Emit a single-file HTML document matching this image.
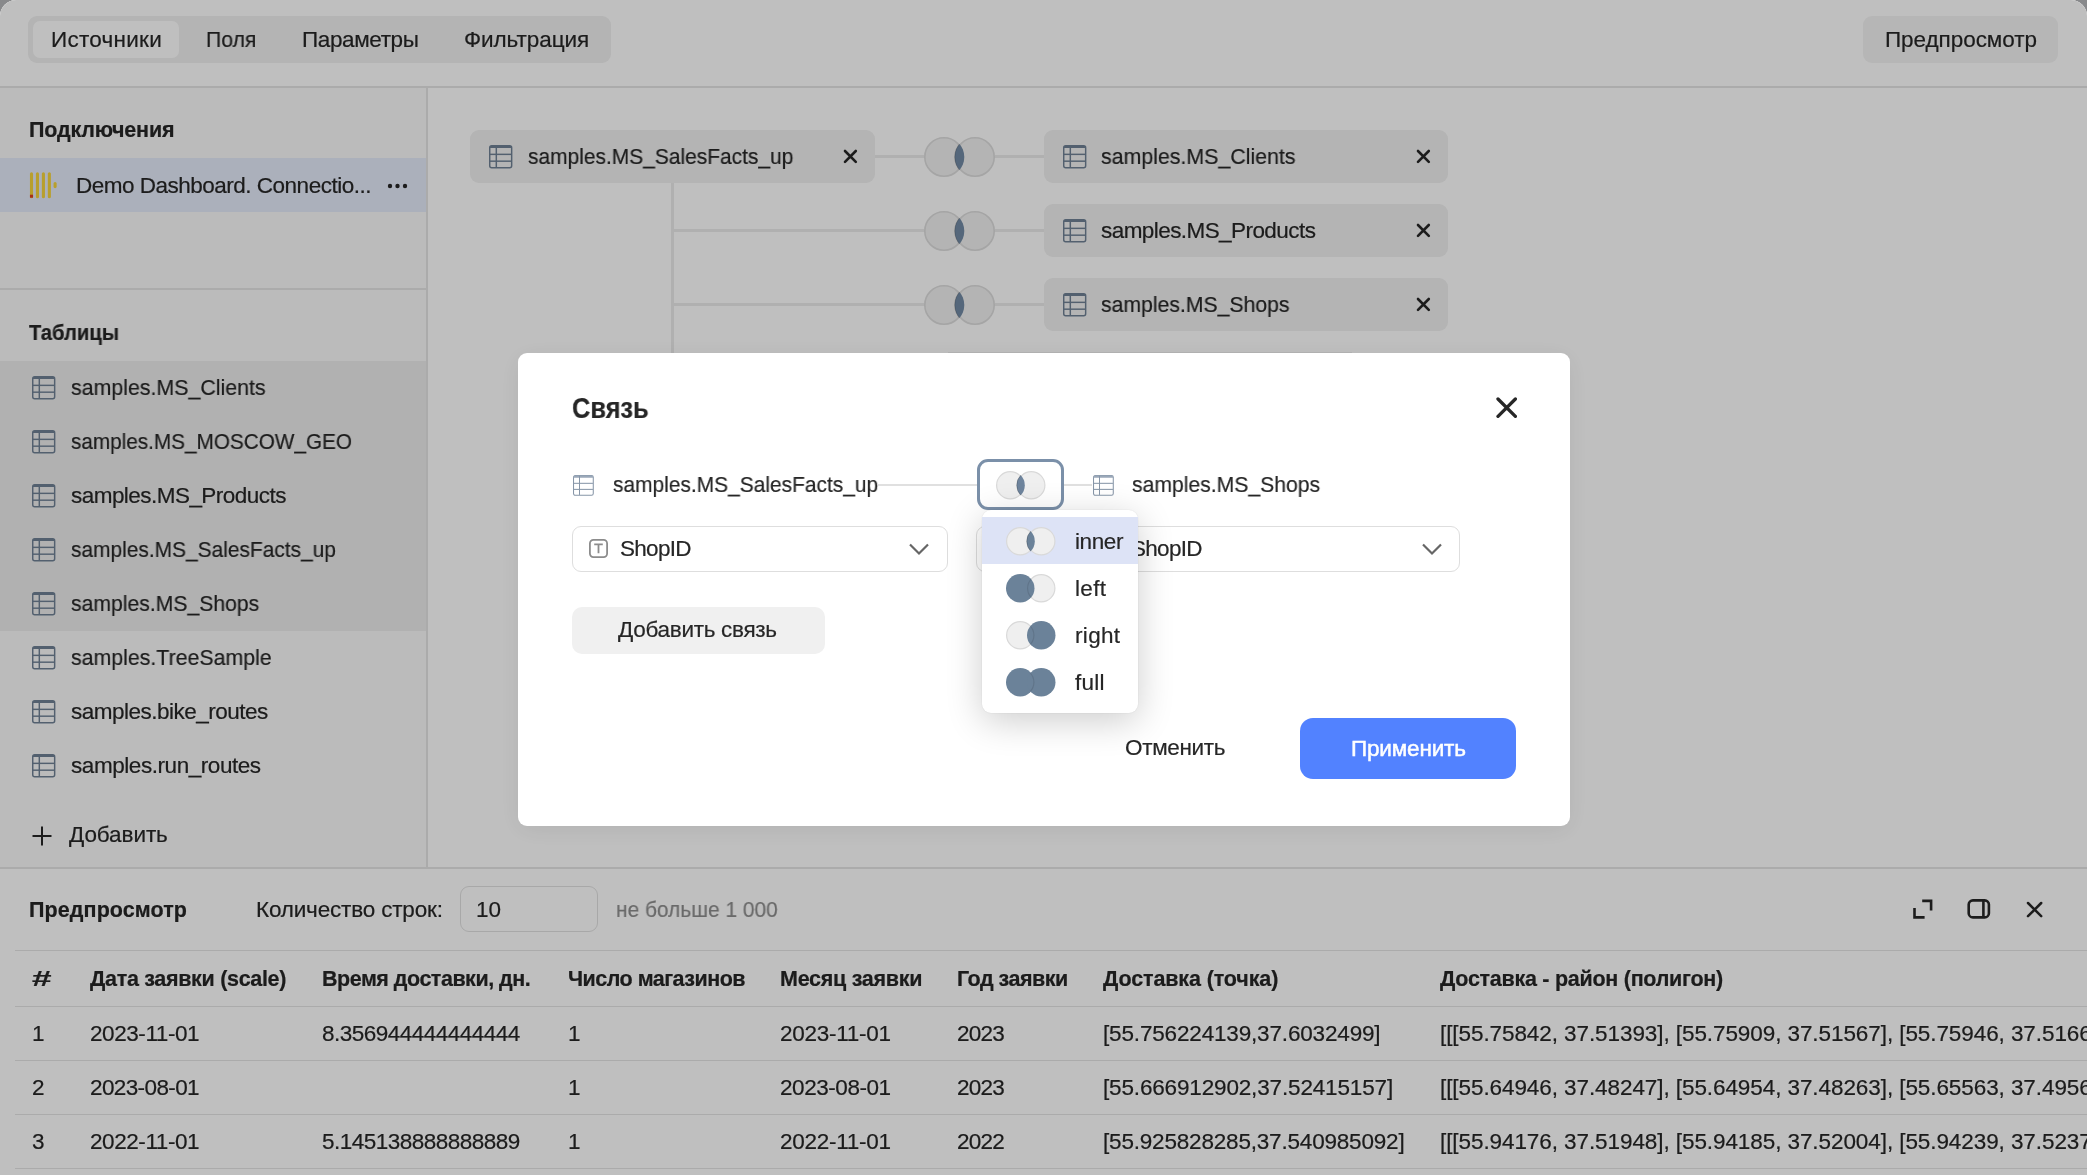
<!DOCTYPE html>
<html><head><meta charset="utf-8"><style>
html,body{margin:0;padding:0;width:2087px;height:1175px;overflow:hidden;background:#88898b}
#pg{position:absolute;left:0;top:0;width:2087px;height:1175px;border-radius:16px 16px 0 0;overflow:hidden;background:#fff}
.b{position:absolute}
.t{position:absolute;white-space:nowrap;line-height:1;will-change:transform;-webkit-text-stroke:0.2px currentColor;font-family:"Liberation Sans",sans-serif;color:#262626}
#ov{position:absolute;left:0;top:0;width:2087px;height:1175px;background:rgba(0,0,0,0.25)}
</style></head><body><div id="pg">
<div class="b" style="left:0px;top:0px;width:2087px;height:86px;background:#fff"></div>
<div class="b" style="left:0px;top:86px;width:2087px;height:1.5999999999999943px;background:#e5e5e5"></div>
<div class="b" style="left:28px;top:16px;width:583px;height:47px;background:#f0f0f0;border-radius:9px"></div>
<div class="b" style="left:33px;top:21px;width:146px;height:36.5px;background:#fff;border-radius:7px"></div>
<div class="t" style="left:50.90px;top:28.9px;font-size:22.5px;letter-spacing:0.262px;">Источники</div>
<div class="t" style="left:206.20px;top:28.9px;font-size:22.5px;transform:scaleX(0.9421);transform-origin:0 0;">Поля</div>
<div class="t" style="left:302.00px;top:28.9px;font-size:22.5px;letter-spacing:-0.387px;">Параметры</div>
<div class="t" style="left:463.70px;top:28.9px;font-size:22.5px;letter-spacing:-0.067px;">Фильтрация</div>
<div class="b" style="left:1863px;top:16px;width:195px;height:47px;background:#f3f3f3;border-radius:9px"></div>
<div class="t" style="left:1885.00px;top:29.2px;font-size:22.5px;letter-spacing:-0.055px;">Предпросмотр</div>
<div class="b" style="left:0px;top:88px;width:427px;height:780px;background:#fafafa"></div>
<div class="b" style="left:426.2px;top:88px;width:1.6000000000000227px;height:780px;background:#e5e5e5"></div>
<div class="t" style="left:29.00px;top:119.5px;font-size:21.5px;letter-spacing:-0.190px;font-weight:700;">Подключения</div>
<div class="b" style="left:0px;top:158px;width:426px;height:54px;background:rgba(82,130,255,0.12)"></div>
<svg class="b" style="left:29px;top:171px" width="30" height="29" viewBox="0 0 30 29"><line x1="2.5" y1="2.8" x2="2.5" y2="25.8" stroke="#f6d53c" stroke-width="3.1" stroke-linecap="round"/><line x1="8.45" y1="2.8" x2="8.45" y2="25.8" stroke="#f6d53c" stroke-width="3.1" stroke-linecap="round"/><line x1="14.4" y1="2.8" x2="14.4" y2="25.8" stroke="#f6d53c" stroke-width="3.1" stroke-linecap="round"/><line x1="20.35" y1="2.8" x2="20.35" y2="25.8" stroke="#f6d53c" stroke-width="3.1" stroke-linecap="round"/><line x1="26.1" y1="12.6" x2="26.1" y2="15.6" stroke="#f6d53c" stroke-width="3.1" stroke-linecap="round"/><rect x="0.95" y="23.7" width="3.1" height="3" fill="#e0401f"/></svg>
<div class="t" style="left:76.40px;top:175.0px;font-size:22.5px;letter-spacing:-0.500px;">Demo Dashboard. Connectio...</div>
<svg class="b" style="left:386px;top:181.5px" width="24" height="8"><circle cx="4" cy="4" r="2.2" fill="#262626"/><circle cx="11.5" cy="4" r="2.2" fill="#262626"/><circle cx="19" cy="4" r="2.2" fill="#262626"/></svg>
<div class="b" style="left:0px;top:288.3px;width:426px;height:1.5px;background:#e5e5e5"></div>
<div class="t" style="left:29.00px;top:322.5px;font-size:21.5px;transform:scaleX(0.9395);transform-origin:0 0;font-weight:700;">Таблицы</div>
<div class="b" style="left:0px;top:361px;width:426px;height:54px;background:rgba(0,0,0,0.05)"></div>
<svg class="b" style="left:32px;top:376px;overflow:visible" width="23.4" height="23.4" viewBox="0 0 24 24"><rect x="0.75" y="0.75" width="22.5" height="22.5" rx="2" fill="none" stroke="#6f8195" stroke-width="1.5"/><path d="M0.75 3.0V2.6Q0.75 0.75 2.6 0.75H21.4Q23.25 0.75 23.25 2.6V3.0Z" fill="#6f8195"/><line x1="7.5" y1="1" x2="7.5" y2="23" stroke="#6f8195" stroke-width="1.5"/><line x1="1" y1="9.6" x2="23" y2="9.6" stroke="#6f8195" stroke-width="1.5"/><line x1="1" y1="16.6" x2="23" y2="16.6" stroke="#6f8195" stroke-width="1.5"/></svg>
<div class="t" style="left:70.60px;top:377.2px;font-size:22.5px;transform:scaleX(0.9493);transform-origin:0 0;">samples.MS_Clients</div>
<div class="b" style="left:0px;top:415px;width:426px;height:54px;background:rgba(0,0,0,0.05)"></div>
<svg class="b" style="left:32px;top:430px;overflow:visible" width="23.4" height="23.4" viewBox="0 0 24 24"><rect x="0.75" y="0.75" width="22.5" height="22.5" rx="2" fill="none" stroke="#6f8195" stroke-width="1.5"/><path d="M0.75 3.0V2.6Q0.75 0.75 2.6 0.75H21.4Q23.25 0.75 23.25 2.6V3.0Z" fill="#6f8195"/><line x1="7.5" y1="1" x2="7.5" y2="23" stroke="#6f8195" stroke-width="1.5"/><line x1="1" y1="9.6" x2="23" y2="9.6" stroke="#6f8195" stroke-width="1.5"/><line x1="1" y1="16.6" x2="23" y2="16.6" stroke="#6f8195" stroke-width="1.5"/></svg>
<div class="t" style="left:70.60px;top:431.2px;font-size:22.5px;transform:scaleX(0.9213);transform-origin:0 0;">samples.MS_MOSCOW_GEO</div>
<div class="b" style="left:0px;top:469px;width:426px;height:54px;background:rgba(0,0,0,0.05)"></div>
<svg class="b" style="left:32px;top:484px;overflow:visible" width="23.4" height="23.4" viewBox="0 0 24 24"><rect x="0.75" y="0.75" width="22.5" height="22.5" rx="2" fill="none" stroke="#6f8195" stroke-width="1.5"/><path d="M0.75 3.0V2.6Q0.75 0.75 2.6 0.75H21.4Q23.25 0.75 23.25 2.6V3.0Z" fill="#6f8195"/><line x1="7.5" y1="1" x2="7.5" y2="23" stroke="#6f8195" stroke-width="1.5"/><line x1="1" y1="9.6" x2="23" y2="9.6" stroke="#6f8195" stroke-width="1.5"/><line x1="1" y1="16.6" x2="23" y2="16.6" stroke="#6f8195" stroke-width="1.5"/></svg>
<div class="t" style="left:70.60px;top:485.2px;font-size:22.5px;letter-spacing:-0.539px;">samples.MS_Products</div>
<div class="b" style="left:0px;top:523px;width:426px;height:54px;background:rgba(0,0,0,0.05)"></div>
<svg class="b" style="left:32px;top:538px;overflow:visible" width="23.4" height="23.4" viewBox="0 0 24 24"><rect x="0.75" y="0.75" width="22.5" height="22.5" rx="2" fill="none" stroke="#6f8195" stroke-width="1.5"/><path d="M0.75 3.0V2.6Q0.75 0.75 2.6 0.75H21.4Q23.25 0.75 23.25 2.6V3.0Z" fill="#6f8195"/><line x1="7.5" y1="1" x2="7.5" y2="23" stroke="#6f8195" stroke-width="1.5"/><line x1="1" y1="9.6" x2="23" y2="9.6" stroke="#6f8195" stroke-width="1.5"/><line x1="1" y1="16.6" x2="23" y2="16.6" stroke="#6f8195" stroke-width="1.5"/></svg>
<div class="t" style="left:70.60px;top:539.2px;font-size:22.5px;transform:scaleX(0.9295);transform-origin:0 0;">samples.MS_SalesFacts_up</div>
<div class="b" style="left:0px;top:577px;width:426px;height:54px;background:rgba(0,0,0,0.05)"></div>
<svg class="b" style="left:32px;top:592px;overflow:visible" width="23.4" height="23.4" viewBox="0 0 24 24"><rect x="0.75" y="0.75" width="22.5" height="22.5" rx="2" fill="none" stroke="#6f8195" stroke-width="1.5"/><path d="M0.75 3.0V2.6Q0.75 0.75 2.6 0.75H21.4Q23.25 0.75 23.25 2.6V3.0Z" fill="#6f8195"/><line x1="7.5" y1="1" x2="7.5" y2="23" stroke="#6f8195" stroke-width="1.5"/><line x1="1" y1="9.6" x2="23" y2="9.6" stroke="#6f8195" stroke-width="1.5"/><line x1="1" y1="16.6" x2="23" y2="16.6" stroke="#6f8195" stroke-width="1.5"/></svg>
<div class="t" style="left:70.60px;top:593.2px;font-size:22.5px;transform:scaleX(0.9410);transform-origin:0 0;">samples.MS_Shops</div>
<svg class="b" style="left:32px;top:646px;overflow:visible" width="23.4" height="23.4" viewBox="0 0 24 24"><rect x="0.75" y="0.75" width="22.5" height="22.5" rx="2" fill="none" stroke="#6f8195" stroke-width="1.5"/><path d="M0.75 3.0V2.6Q0.75 0.75 2.6 0.75H21.4Q23.25 0.75 23.25 2.6V3.0Z" fill="#6f8195"/><line x1="7.5" y1="1" x2="7.5" y2="23" stroke="#6f8195" stroke-width="1.5"/><line x1="1" y1="9.6" x2="23" y2="9.6" stroke="#6f8195" stroke-width="1.5"/><line x1="1" y1="16.6" x2="23" y2="16.6" stroke="#6f8195" stroke-width="1.5"/></svg>
<div class="t" style="left:70.60px;top:647.2px;font-size:22.5px;transform:scaleX(0.9476);transform-origin:0 0;">samples.TreeSample</div>
<svg class="b" style="left:32px;top:700px;overflow:visible" width="23.4" height="23.4" viewBox="0 0 24 24"><rect x="0.75" y="0.75" width="22.5" height="22.5" rx="2" fill="none" stroke="#6f8195" stroke-width="1.5"/><path d="M0.75 3.0V2.6Q0.75 0.75 2.6 0.75H21.4Q23.25 0.75 23.25 2.6V3.0Z" fill="#6f8195"/><line x1="7.5" y1="1" x2="7.5" y2="23" stroke="#6f8195" stroke-width="1.5"/><line x1="1" y1="9.6" x2="23" y2="9.6" stroke="#6f8195" stroke-width="1.5"/><line x1="1" y1="16.6" x2="23" y2="16.6" stroke="#6f8195" stroke-width="1.5"/></svg>
<div class="t" style="left:70.60px;top:701.2px;font-size:22.5px;letter-spacing:-0.500px;">samples.bike_routes</div>
<svg class="b" style="left:32px;top:754px;overflow:visible" width="23.4" height="23.4" viewBox="0 0 24 24"><rect x="0.75" y="0.75" width="22.5" height="22.5" rx="2" fill="none" stroke="#6f8195" stroke-width="1.5"/><path d="M0.75 3.0V2.6Q0.75 0.75 2.6 0.75H21.4Q23.25 0.75 23.25 2.6V3.0Z" fill="#6f8195"/><line x1="7.5" y1="1" x2="7.5" y2="23" stroke="#6f8195" stroke-width="1.5"/><line x1="1" y1="9.6" x2="23" y2="9.6" stroke="#6f8195" stroke-width="1.5"/><line x1="1" y1="16.6" x2="23" y2="16.6" stroke="#6f8195" stroke-width="1.5"/></svg>
<div class="t" style="left:70.60px;top:755.2px;font-size:22.5px;letter-spacing:-0.441px;">samples.run_routes</div>
<svg class="b" style="left:31px;top:825px" width="22" height="22" viewBox="0 0 22 22"><path d="M11 1.5V20.5M1.5 11H20.5" stroke="#262626" stroke-width="2.0"/></svg>
<div class="t" style="left:69.00px;top:824.3px;font-size:22.5px;letter-spacing:-0.086px;">Добавить</div>
<div class="b" style="left:428px;top:88px;width:1659px;height:780px;background:#fff"></div>
<div class="b" style="left:671px;top:183px;width:3px;height:170px;background:#ebebeb"></div>
<div class="b" style="left:948px;top:351.5px;width:404px;height:1.5px;background:rgba(0,0,0,0.06)"></div>
<div class="b" style="left:875px;top:155px;width:49px;height:3px;background:#ebebeb"></div>
<div class="b" style="left:995px;top:155px;width:49px;height:3px;background:#ebebeb"></div>
<div class="b" style="left:674px;top:229px;width:250px;height:3px;background:#ebebeb"></div>
<div class="b" style="left:995px;top:229px;width:49px;height:3px;background:#ebebeb"></div>
<div class="b" style="left:674px;top:303px;width:250px;height:3px;background:#ebebeb"></div>
<div class="b" style="left:995px;top:303px;width:49px;height:3px;background:#ebebeb"></div>
<div class="b" style="left:470px;top:130px;width:405px;height:53px;background:#f0f0f0;border-radius:9px"></div>
<svg class="b" style="left:489.1px;top:145.1px;overflow:visible" width="23.4" height="23.4" viewBox="0 0 24 24"><rect x="0.75" y="0.75" width="22.5" height="22.5" rx="2" fill="none" stroke="#6f8195" stroke-width="1.5"/><path d="M0.75 3.0V2.6Q0.75 0.75 2.6 0.75H21.4Q23.25 0.75 23.25 2.6V3.0Z" fill="#6f8195"/><line x1="7.5" y1="1" x2="7.5" y2="23" stroke="#6f8195" stroke-width="1.5"/><line x1="1" y1="9.6" x2="23" y2="9.6" stroke="#6f8195" stroke-width="1.5"/><line x1="1" y1="16.6" x2="23" y2="16.6" stroke="#6f8195" stroke-width="1.5"/></svg>
<div class="t" style="left:527.60px;top:146.0px;font-size:22.5px;transform:scaleX(0.9309);transform-origin:0 0;">samples.MS_SalesFacts_up</div>
<svg class="b" style="left:842.9px;top:149.4px" width="14.8" height="14.8" viewBox="-7.4 -7.4 14.8 14.8"><path d="M-5.4 -5.4L5.4 5.4M5.4 -5.4L-5.4 5.4" stroke="#262626" stroke-width="2.6" stroke-linecap="round"/></svg>
<div class="b" style="left:1044px;top:130px;width:404px;height:53px;background:#f0f0f0;border-radius:9px"></div>
<svg class="b" style="left:1063px;top:145px;overflow:visible" width="23.4" height="23.4" viewBox="0 0 24 24"><rect x="0.75" y="0.75" width="22.5" height="22.5" rx="2" fill="none" stroke="#6f8195" stroke-width="1.5"/><path d="M0.75 3.0V2.6Q0.75 0.75 2.6 0.75H21.4Q23.25 0.75 23.25 2.6V3.0Z" fill="#6f8195"/><line x1="7.5" y1="1" x2="7.5" y2="23" stroke="#6f8195" stroke-width="1.5"/><line x1="1" y1="9.6" x2="23" y2="9.6" stroke="#6f8195" stroke-width="1.5"/><line x1="1" y1="16.6" x2="23" y2="16.6" stroke="#6f8195" stroke-width="1.5"/></svg>
<div class="t" style="left:1101.40px;top:146.0px;font-size:22.5px;transform:scaleX(0.9488);transform-origin:0 0;">samples.MS_Clients</div>
<svg class="b" style="left:1416.0px;top:149.29999999999998px" width="14.8" height="14.8" viewBox="-7.4 -7.4 14.8 14.8"><path d="M-5.4 -5.4L5.4 5.4M5.4 -5.4L-5.4 5.4" stroke="#262626" stroke-width="2.6" stroke-linecap="round"/></svg>
<svg class="b" style="left:922.00px;top:134.70px" width="75.00" height="44.00"><defs><clipPath id="vl1"><circle cx="22.0" cy="22.0" r="20.3"/></clipPath><clipPath id="vr1"><circle cx="53.0" cy="22.0" r="20.0"/></clipPath></defs><circle cx="22.0" cy="22.0" r="19.2" fill="#f1f1f1" stroke="#dcdcdc" stroke-width="1.6"/><circle cx="53.0" cy="22.0" r="19.2" fill="#f1f1f1" stroke="#dcdcdc" stroke-width="1.6"/><circle cx="53.0" cy="22.0" r="20.3" fill="#728aa4" stroke="rgba(0,0,0,0.25)" stroke-width="0.8" clip-path="url(#vl1)"/></svg>
<div class="b" style="left:1044px;top:204px;width:404px;height:53px;background:#f0f0f0;border-radius:9px"></div>
<svg class="b" style="left:1063px;top:219px;overflow:visible" width="23.4" height="23.4" viewBox="0 0 24 24"><rect x="0.75" y="0.75" width="22.5" height="22.5" rx="2" fill="none" stroke="#6f8195" stroke-width="1.5"/><path d="M0.75 3.0V2.6Q0.75 0.75 2.6 0.75H21.4Q23.25 0.75 23.25 2.6V3.0Z" fill="#6f8195"/><line x1="7.5" y1="1" x2="7.5" y2="23" stroke="#6f8195" stroke-width="1.5"/><line x1="1" y1="9.6" x2="23" y2="9.6" stroke="#6f8195" stroke-width="1.5"/><line x1="1" y1="16.6" x2="23" y2="16.6" stroke="#6f8195" stroke-width="1.5"/></svg>
<div class="t" style="left:1101.40px;top:220.0px;font-size:22.5px;letter-spacing:-0.567px;">samples.MS_Products</div>
<svg class="b" style="left:1416.0px;top:223.29999999999998px" width="14.8" height="14.8" viewBox="-7.4 -7.4 14.8 14.8"><path d="M-5.4 -5.4L5.4 5.4M5.4 -5.4L-5.4 5.4" stroke="#262626" stroke-width="2.6" stroke-linecap="round"/></svg>
<svg class="b" style="left:922.00px;top:208.70px" width="75.00" height="44.00"><defs><clipPath id="vl2"><circle cx="22.0" cy="22.0" r="20.3"/></clipPath><clipPath id="vr2"><circle cx="53.0" cy="22.0" r="20.0"/></clipPath></defs><circle cx="22.0" cy="22.0" r="19.2" fill="#f1f1f1" stroke="#dcdcdc" stroke-width="1.6"/><circle cx="53.0" cy="22.0" r="19.2" fill="#f1f1f1" stroke="#dcdcdc" stroke-width="1.6"/><circle cx="53.0" cy="22.0" r="20.3" fill="#728aa4" stroke="rgba(0,0,0,0.25)" stroke-width="0.8" clip-path="url(#vl2)"/></svg>
<div class="b" style="left:1044px;top:278px;width:404px;height:53px;background:#f0f0f0;border-radius:9px"></div>
<svg class="b" style="left:1063px;top:293px;overflow:visible" width="23.4" height="23.4" viewBox="0 0 24 24"><rect x="0.75" y="0.75" width="22.5" height="22.5" rx="2" fill="none" stroke="#6f8195" stroke-width="1.5"/><path d="M0.75 3.0V2.6Q0.75 0.75 2.6 0.75H21.4Q23.25 0.75 23.25 2.6V3.0Z" fill="#6f8195"/><line x1="7.5" y1="1" x2="7.5" y2="23" stroke="#6f8195" stroke-width="1.5"/><line x1="1" y1="9.6" x2="23" y2="9.6" stroke="#6f8195" stroke-width="1.5"/><line x1="1" y1="16.6" x2="23" y2="16.6" stroke="#6f8195" stroke-width="1.5"/></svg>
<div class="t" style="left:1101.40px;top:294.0px;font-size:22.5px;transform:scaleX(0.9425);transform-origin:0 0;">samples.MS_Shops</div>
<svg class="b" style="left:1416.0px;top:297.3px" width="14.8" height="14.8" viewBox="-7.4 -7.4 14.8 14.8"><path d="M-5.4 -5.4L5.4 5.4M5.4 -5.4L-5.4 5.4" stroke="#262626" stroke-width="2.6" stroke-linecap="round"/></svg>
<svg class="b" style="left:922.00px;top:282.70px" width="75.00" height="44.00"><defs><clipPath id="vl3"><circle cx="22.0" cy="22.0" r="20.3"/></clipPath><clipPath id="vr3"><circle cx="53.0" cy="22.0" r="20.0"/></clipPath></defs><circle cx="22.0" cy="22.0" r="19.2" fill="#f1f1f1" stroke="#dcdcdc" stroke-width="1.6"/><circle cx="53.0" cy="22.0" r="19.2" fill="#f1f1f1" stroke="#dcdcdc" stroke-width="1.6"/><circle cx="53.0" cy="22.0" r="20.3" fill="#728aa4" stroke="rgba(0,0,0,0.25)" stroke-width="0.8" clip-path="url(#vl3)"/></svg>
<div class="b" style="left:0px;top:868px;width:2087px;height:307px;background:#fff"></div>
<div class="b" style="left:0px;top:867.2px;width:2087px;height:1.599999999999909px;background:#e5e5e5"></div>
<div class="t" style="left:29.00px;top:899.5px;font-size:21.5px;letter-spacing:0.091px;font-weight:700;">Предпросмотр</div>
<div class="t" style="left:255.60px;top:898.7px;font-size:22.5px;letter-spacing:-0.175px;">Количество строк:</div>
<div class="b" style="left:460px;top:886px;width:138px;height:46px;border:1.5px solid rgba(0,0,0,0.12);border-radius:9px;box-sizing:border-box"></div>
<div class="t" style="left:476.00px;top:898.7px;font-size:22.5px;">10</div>
<div class="t" style="left:615.60px;top:898.7px;font-size:22.5px;transform:scaleX(0.9294);transform-origin:0 0;color:#8c8c8c;">не больше 1 000</div>
<svg class="b" style="left:1908px;top:895px" width="30" height="30" viewBox="0 0 30 30"><path d="M6.5 13.1V22.4H16.6M14.2 5.9H23.1V15.5" fill="none" stroke="#262626" stroke-width="2.6"/></svg>
<svg class="b" style="left:1963px;top:895px" width="32" height="30" viewBox="0 0 32 30"><rect x="5.7" y="5.4" width="20.2" height="17" rx="4.2" fill="none" stroke="#262626" stroke-width="2.6"/><path d="M20.4 5.4V22.4" stroke="#262626" stroke-width="2.6"/></svg>
<svg class="b" style="left:2026.0px;top:900.6px" width="17.2" height="17.2" viewBox="-8.6 -8.6 17.2 17.2"><path d="M-6.6 -6.6L6.6 6.6M6.6 -6.6L-6.6 6.6" stroke="#262626" stroke-width="2.5" stroke-linecap="round"/></svg>
<div class="b" style="left:15px;top:949.8px;width:2072px;height:1.5px;background:#e5e5e5"></div>
<div class="b" style="left:15px;top:1005.8px;width:2072px;height:1.5px;background:#e5e5e5"></div>
<div class="b" style="left:15px;top:1059.8px;width:2072px;height:1.5px;background:#e5e5e5"></div>
<div class="b" style="left:15px;top:1113.8px;width:2072px;height:1.5px;background:#e5e5e5"></div>
<div class="b" style="left:15px;top:1167.8px;width:2072px;height:1.5px;background:#e5e5e5"></div>
<div class="t" style="left:32.00px;top:969.1px;font-size:21.5px;transform:scaleX(1.6333);transform-origin:0 0;font-weight:700;">#</div>
<div class="t" style="left:90.00px;top:969.1px;font-size:21.5px;letter-spacing:-0.306px;font-weight:700;">Дата заявки (scale)</div>
<div class="t" style="left:321.60px;top:969.1px;font-size:21.5px;letter-spacing:-0.483px;font-weight:700;">Время доставки, дн.</div>
<div class="t" style="left:567.50px;top:969.1px;font-size:21.5px;letter-spacing:-0.521px;font-weight:700;">Число магазинов</div>
<div class="t" style="left:779.50px;top:969.1px;font-size:21.5px;letter-spacing:-0.264px;font-weight:700;">Месяц заявки</div>
<div class="t" style="left:956.50px;top:969.1px;font-size:21.5px;letter-spacing:-0.500px;font-weight:700;">Год заявки</div>
<div class="t" style="left:1102.50px;top:969.1px;font-size:21.5px;letter-spacing:-0.120px;font-weight:700;">Доставка (точка)</div>
<div class="t" style="left:1439.50px;top:969.1px;font-size:21.5px;letter-spacing:-0.268px;font-weight:700;">Доставка - район (полигон)</div>
<div class="t" style="left:32.00px;top:1022.7px;font-size:22.5px;">1</div>
<div class="t" style="left:90.00px;top:1022.7px;font-size:22.5px;letter-spacing:-0.422px;">2023-11-01</div>
<div class="t" style="left:321.60px;top:1022.7px;font-size:22.5px;letter-spacing:-0.506px;">8.356944444444444</div>
<div class="t" style="left:567.50px;top:1022.7px;font-size:22.5px;">1</div>
<div class="t" style="left:779.50px;top:1022.7px;font-size:22.5px;letter-spacing:-0.256px;">2023-11-01</div>
<div class="t" style="left:956.50px;top:1022.7px;font-size:22.5px;letter-spacing:-0.733px;">2023</div>
<div class="t" style="left:1102.50px;top:1022.7px;font-size:22.5px;letter-spacing:-0.163px;">[55.756224139,37.6032499]</div>
<div class="t" style="left:1439.50px;top:1022.7px;font-size:22.5px;letter-spacing:-0.08px;">[[[55.75842, 37.51393], [55.75909, 37.51567], [55.75946, 37.51668], [55.75982, 37.5178]]]</div>
<div class="t" style="left:32.00px;top:1076.7px;font-size:22.5px;">2</div>
<div class="t" style="left:90.00px;top:1076.7px;font-size:22.5px;letter-spacing:-0.611px;">2023-08-01</div>
<div class="t" style="left:567.50px;top:1076.7px;font-size:22.5px;">1</div>
<div class="t" style="left:779.50px;top:1076.7px;font-size:22.5px;letter-spacing:-0.444px;">2023-08-01</div>
<div class="t" style="left:956.50px;top:1076.7px;font-size:22.5px;letter-spacing:-0.733px;">2023</div>
<div class="t" style="left:1102.50px;top:1076.7px;font-size:22.5px;letter-spacing:-0.156px;">[55.666912902,37.52415157]</div>
<div class="t" style="left:1439.50px;top:1076.7px;font-size:22.5px;letter-spacing:-0.08px;">[[[55.64946, 37.48247], [55.64954, 37.48263], [55.65563, 37.49561], [55.6571, 37.4987]]]</div>
<div class="t" style="left:32.00px;top:1130.7px;font-size:22.5px;">3</div>
<div class="t" style="left:90.00px;top:1130.7px;font-size:22.5px;letter-spacing:-0.422px;">2022-11-01</div>
<div class="t" style="left:321.60px;top:1130.7px;font-size:22.5px;letter-spacing:-0.506px;">5.145138888888889</div>
<div class="t" style="left:567.50px;top:1130.7px;font-size:22.5px;">1</div>
<div class="t" style="left:779.50px;top:1130.7px;font-size:22.5px;letter-spacing:-0.256px;">2022-11-01</div>
<div class="t" style="left:956.50px;top:1130.7px;font-size:22.5px;letter-spacing:-0.733px;">2022</div>
<div class="t" style="left:1102.50px;top:1130.7px;font-size:22.5px;letter-spacing:-0.188px;">[55.925828285,37.540985092]</div>
<div class="t" style="left:1439.50px;top:1130.7px;font-size:22.5px;letter-spacing:-0.08px;">[[[55.94176, 37.51948], [55.94185, 37.52004], [55.94239, 37.52371], [55.9431, 37.5261]]]</div>
<div id="ov"></div>
<div class="b" style="left:518px;top:353px;width:1052px;height:473px;background:#fff;border-radius:9px;box-shadow:0 4px 24px rgba(0,0,0,0.07)"></div>
<div class="t" style="left:572.30px;top:393.8px;font-size:29px;transform:scaleX(0.8756);transform-origin:0 0;font-weight:700;">Связь</div>
<svg class="b" style="left:1495.5px;top:396.5px" width="21.4" height="21.4" viewBox="-10.7 -10.7 21.4 21.4"><path d="M-8.7 -8.7L8.7 8.7M8.7 -8.7L-8.7 8.7" stroke="#262626" stroke-width="3.3" stroke-linecap="round"/></svg>
<svg class="b" style="left:573px;top:474.7px;overflow:visible" width="20.8" height="20.8" viewBox="0 0 24 24"><rect x="0.6" y="0.6" width="22.8" height="22.8" rx="2" fill="none" stroke="#8796a8" stroke-width="1.2"/><path d="M0.6 3.2V2.6Q0.6 0.6 2.6 0.6H21.4Q23.4 0.6 23.4 2.6V3.2Z" fill="#9aa8b9"/><line x1="7.5" y1="1" x2="7.5" y2="23" stroke="#8796a8" stroke-width="1.2"/><line x1="1" y1="9.6" x2="23" y2="9.6" stroke="#8796a8" stroke-width="1.2"/><line x1="1" y1="16.6" x2="23" y2="16.6" stroke="#8796a8" stroke-width="1.2"/></svg>
<div class="t" style="left:612.50px;top:474.4px;font-size:22.5px;transform:scaleX(0.9302);transform-origin:0 0;">samples.MS_SalesFacts_up</div>
<div class="b" style="left:878px;top:484px;width:99px;height:2px;background:#e0e0e0"></div>
<div class="b" style="left:1064px;top:484px;width:28px;height:2px;background:#e0e0e0"></div>
<div class="b" style="left:977px;top:458.5px;width:87px;height:51.5px;border:3px solid #7b90a9;border-radius:11px;box-sizing:border-box;background:#fff"></div>
<svg class="b" style="left:993.75px;top:468.75px" width="53.50" height="32.50"><defs><clipPath id="vl4"><circle cx="16.25" cy="16.25" r="14.55"/></clipPath><clipPath id="vr4"><circle cx="37.25" cy="16.25" r="14.25"/></clipPath></defs><circle cx="16.25" cy="16.25" r="13.65" fill="#efefef" stroke="#d9d9d9" stroke-width="1.2"/><circle cx="37.25" cy="16.25" r="13.65" fill="#efefef" stroke="#d9d9d9" stroke-width="1.2"/><circle cx="37.25" cy="16.25" r="14.55" fill="#6e849d" stroke="rgba(0,0,0,0.25)" stroke-width="0.8" clip-path="url(#vl4)"/></svg>
<svg class="b" style="left:1092.8px;top:474.7px;overflow:visible" width="20.8" height="20.8" viewBox="0 0 24 24"><rect x="0.6" y="0.6" width="22.8" height="22.8" rx="2" fill="none" stroke="#8796a8" stroke-width="1.2"/><path d="M0.6 3.2V2.6Q0.6 0.6 2.6 0.6H21.4Q23.4 0.6 23.4 2.6V3.2Z" fill="#9aa8b9"/><line x1="7.5" y1="1" x2="7.5" y2="23" stroke="#8796a8" stroke-width="1.2"/><line x1="1" y1="9.6" x2="23" y2="9.6" stroke="#8796a8" stroke-width="1.2"/><line x1="1" y1="16.6" x2="23" y2="16.6" stroke="#8796a8" stroke-width="1.2"/></svg>
<div class="t" style="left:1132.30px;top:474.4px;font-size:22.5px;transform:scaleX(0.9405);transform-origin:0 0;">samples.MS_Shops</div>
<div class="b" style="left:572px;top:526px;width:376px;height:46px;border:1.5px solid #dedede;border-radius:9px;box-sizing:border-box"></div>
<svg class="b" style="left:589px;top:539px" width="19" height="19" viewBox="0 0 19 19"><rect x="0.9" y="0.9" width="17.2" height="17.2" rx="3.5" fill="none" stroke="#8c8c8c" stroke-width="1.8"/><path d="M5.2 5.3H13.8M9.5 5.3V14.2" stroke="#8c8c8c" stroke-width="1.8"/></svg>
<div class="t" style="left:619.50px;top:538.4px;font-size:22.5px;letter-spacing:-0.700px;">ShopID</div>
<svg class="b" style="left:907px;top:541px" width="24" height="16" viewBox="0 0 24 16"><path d="M3 3.5L12 12.5L21 3.5" fill="none" stroke="#666" stroke-width="2.2"/></svg>
<div class="b" style="left:976px;top:526px;width:484px;height:46px;border:1.5px solid #dedede;border-radius:9px;box-sizing:border-box"></div>
<div class="t" style="left:1131.10px;top:538.4px;font-size:22.5px;letter-spacing:-0.700px;">ShopID</div>
<svg class="b" style="left:1419.5px;top:541px" width="24" height="16" viewBox="0 0 24 16"><path d="M3 3.5L12 12.5L21 3.5" fill="none" stroke="#666" stroke-width="2.2"/></svg>
<div class="b" style="left:572px;top:607px;width:252.5px;height:46.5px;background:#f0f0f0;border-radius:10px"></div>
<div class="t" style="left:618.40px;top:619.3px;font-size:22.5px;letter-spacing:-0.292px;">Добавить связь</div>
<div class="t" style="left:1125.30px;top:737.4px;font-size:22.5px;letter-spacing:-0.329px;">Отменить</div>
<div class="b" style="left:1300.4px;top:718px;width:215.69999999999982px;height:60.5px;background:#5282ff;border-radius:13px"></div>
<div class="t" style="left:1351.00px;top:737.9px;font-size:22.5px;letter-spacing:-0.162px;color:#fff;-webkit-text-stroke:0.5px #fff;">Применить</div>
<div class="b" style="left:981.5px;top:510px;width:156.5px;height:203px;background:#fff;border-radius:9px;box-shadow:0 8px 36px rgba(0,0,0,0.2),0 0 1.5px rgba(0,0,0,0.12)"></div>
<div class="b" style="left:981.5px;top:517px;width:156.5px;height:47px;background:#dde3f6"></div>
<svg class="b" style="left:1003.75px;top:524.75px" width="53.50" height="32.50"><defs><clipPath id="vl5"><circle cx="16.25" cy="16.25" r="14.55"/></clipPath><clipPath id="vr5"><circle cx="37.25" cy="16.25" r="14.25"/></clipPath></defs><circle cx="16.25" cy="16.25" r="13.65" fill="#efefef" stroke="#d9d9d9" stroke-width="1.2"/><circle cx="37.25" cy="16.25" r="13.65" fill="#efefef" stroke="#d9d9d9" stroke-width="1.2"/><circle cx="37.25" cy="16.25" r="14.55" fill="#6b8299" stroke="rgba(0,0,0,0.25)" stroke-width="0.8" clip-path="url(#vl5)"/></svg>
<div class="t" style="left:1075.30px;top:531.0px;font-size:22.5px;letter-spacing:-0.400px;">inner</div>
<svg class="b" style="left:1003.75px;top:571.75px" width="53.50" height="32.50"><defs><clipPath id="vl6"><circle cx="16.25" cy="16.25" r="14.55"/></clipPath><clipPath id="vr6"><circle cx="37.25" cy="16.25" r="14.25"/></clipPath></defs><circle cx="37.25" cy="16.25" r="13.65" fill="#efefef" stroke="#d9d9d9" stroke-width="1.2"/><circle cx="16.25" cy="16.25" r="14.25" fill="#6b8299"/><circle cx="37.25" cy="16.25" r="13.65" fill="none" stroke="rgba(0,0,0,0.10)" stroke-width="1.2" clip-path="url(#vl6)"/></svg>
<div class="t" style="left:1075.30px;top:578.0px;font-size:22.5px;letter-spacing:0.367px;">left</div>
<svg class="b" style="left:1003.75px;top:618.75px" width="53.50" height="32.50"><defs><clipPath id="vl7"><circle cx="16.25" cy="16.25" r="14.55"/></clipPath><clipPath id="vr7"><circle cx="37.25" cy="16.25" r="14.25"/></clipPath></defs><circle cx="16.25" cy="16.25" r="13.65" fill="#efefef" stroke="#d9d9d9" stroke-width="1.2"/><circle cx="37.25" cy="16.25" r="14.25" fill="#6b8299"/><circle cx="16.25" cy="16.25" r="13.65" fill="none" stroke="rgba(0,0,0,0.10)" stroke-width="1.2" clip-path="url(#vr7)"/></svg>
<div class="t" style="left:1075.30px;top:625.0px;font-size:22.5px;letter-spacing:0.325px;">right</div>
<svg class="b" style="left:1003.75px;top:665.75px" width="53.50" height="32.50"><defs><clipPath id="vl8"><circle cx="16.25" cy="16.25" r="14.55"/></clipPath><clipPath id="vr8"><circle cx="37.25" cy="16.25" r="14.25"/></clipPath></defs><circle cx="16.25" cy="16.25" r="14.25" fill="#6b8299"/><circle cx="37.25" cy="16.25" r="14.25" fill="#6b8299"/><circle cx="16.25" cy="16.25" r="13.65" fill="none" stroke="rgba(0,0,0,0.10)" stroke-width="1.2" clip-path="url(#vr8)"/></svg>
<div class="t" style="left:1075.30px;top:672.0px;font-size:22.5px;letter-spacing:0.233px;">full</div>
</div></body></html>
